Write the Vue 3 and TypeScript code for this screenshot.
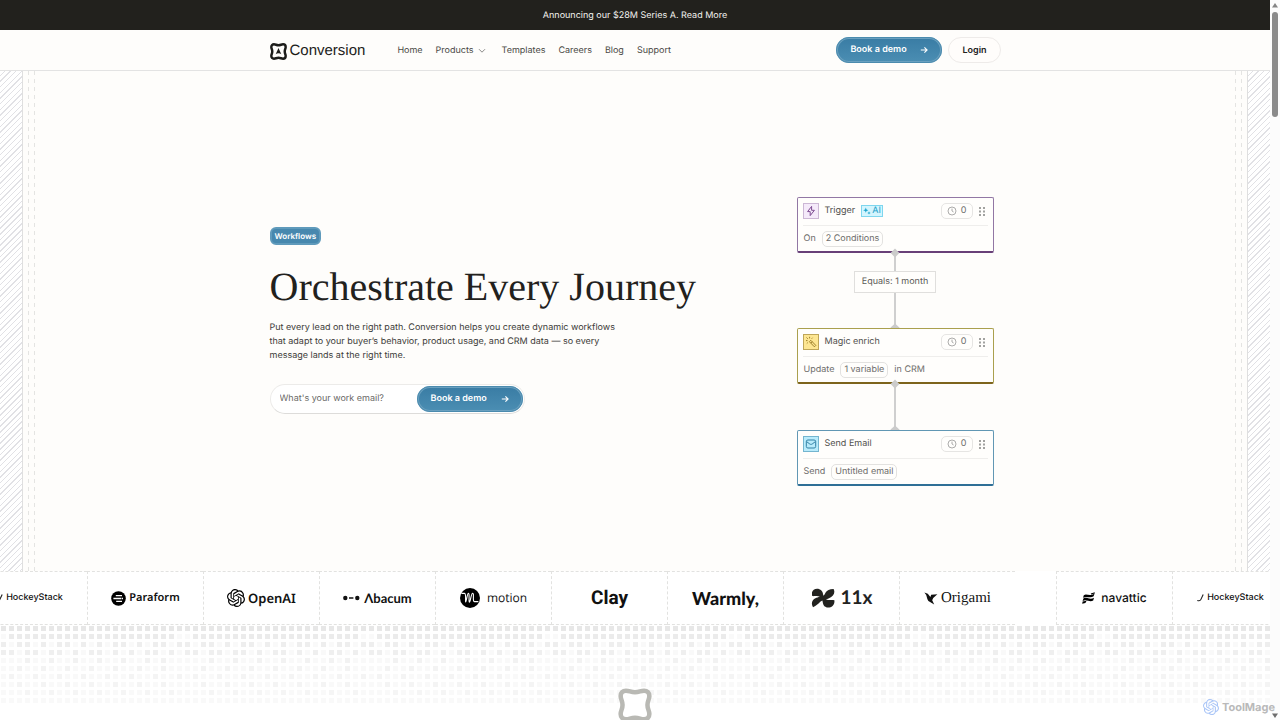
<script setup lang="ts">
interface Step {
  kind: 'trigger' | 'enrich' | 'email'
  title: string
  ai?: boolean
  before: string
  value: string
  after?: string
  link?: 'long' | 'short'
  label?: string
}

const steps: Step[] = [
  { kind: 'trigger', title: 'Trigger', ai: true, before: 'On', value: '2 Conditions', link: 'long', label: 'Equals: 1 month' },
  { kind: 'enrich', title: 'Magic enrich', before: 'Update', value: '1 variable', after: 'in CRM', link: 'short' },
  { kind: 'email', title: 'Send Email', before: 'Send', value: 'Untitled email' },
]

const brands = ['HockeyStack', 'Paraform', 'OpenAI', 'Λbacum', 'motion', 'Clay', 'Warmly,', '11x', 'Origami', 'navattic', 'HockeyStack']
const brandClass = ['hockey', 'paraform', 'openai', 'abacum', 'motion', 'clay', 'warmly', 'eleven', 'origami', 'navattic', 'hockey']

const frame =
  'M4.2 1.4C6.2 1.4 6.6 2.3 9 2.3C11.4 2.3 11.8 1.4 13.8 1.4C15.5 1.4 16.6 2.5 16.6 4.2C16.6 6.2 15.6 6.6 15.6 9C15.6 11.4 16.6 11.8 16.6 13.8C16.6 15.5 15.5 16.6 13.8 16.6C11.8 16.6 11.4 15.7 9 15.7C6.6 15.7 6.2 16.6 4.2 16.6C2.5 16.6 1.4 15.5 1.4 13.8C1.4 11.8 2.4 11.4 2.4 9C2.4 6.6 1.4 6.2 1.4 4.2C1.4 2.5 2.5 1.4 4.2 1.4Z'

const knot =
  'M22.2819 9.8211a5.9847 5.9847 0 0 0-.5157-4.9108 6.0462 6.0462 0 0 0-6.5098-2.9A6.0651 6.0651 0 0 0 4.9807 4.1818a5.9847 5.9847 0 0 0-3.9977 2.9 6.0462 6.0462 0 0 0 .7427 7.0966 5.98 5.98 0 0 0 .511 4.9107 6.051 6.051 0 0 0 6.5146 2.9001A5.9847 5.9847 0 0 0 13.2599 24a6.0557 6.0557 0 0 0 5.7718-4.2058 5.9894 5.9894 0 0 0 3.9977-2.9001 6.0557 6.0557 0 0 0-.7475-7.0729zm-9.022 12.6081a4.4755 4.4755 0 0 1-2.8764-1.0408l.1419-.0804 4.7783-2.7582a.7948.7948 0 0 0 .3927-.6813v-6.7369l2.02 1.1686a.071.071 0 0 1 .038.0615v5.5826a4.504 4.504 0 0 1-4.4945 4.4944zm-9.6607-4.1254a4.4708 4.4708 0 0 1-.5346-3.0137l.142.0852 4.783 2.7582a.7712.7712 0 0 0 .7806 0l5.8428-3.3685v2.3324a.0804.0804 0 0 1-.0332.0615L9.74 19.9502a4.4992 4.4992 0 0 1-6.1408-1.6464zM2.3408 7.8956a4.485 4.485 0 0 1 2.3655-1.9728V11.6a.7664.7664 0 0 0 .3879.6765l5.8144 3.3543-2.0201 1.1685a.0757.0757 0 0 1-.071 0l-4.8303-2.7865A4.504 4.504 0 0 1 2.3408 7.872zm16.5963 3.8558L13.1038 8.364 15.1192 7.2a.0757.0757 0 0 1 .071 0l4.8303 2.7913a4.4944 4.4944 0 0 1-.6765 8.1042v-5.6772a.79.79 0 0 0-.407-.667zm2.0107-3.0231l-.142-.0852-4.7735-2.7818a.7759.7759 0 0 0-.7854 0L9.409 9.2297V6.8974a.0662.0662 0 0 1 .0284-.0615l4.8303-2.7866a4.4992 4.4992 0 0 1 6.6802 4.66zM8.3065 12.863l-2.02-1.1638a.0804.0804 0 0 1-.038-.0567V6.0742a4.4992 4.4992 0 0 1 7.3757-3.4537l-.142.0805L8.704 5.459a.7948.7948 0 0 0-.3927.6813zm1.0976-2.3654l2.602-1.4998 2.6069 1.4998v2.9994l-2.5974 1.4997-2.6067-1.4997Z'

// One repeat of the halftone grid: '#' is a strong cell, '.' a faint one.
const grid = [
  '#######################',
  '.#####################.',
  '#.##.#.##.#.#.##.#.##.#',
  '##.##.##.#.##.#.#.##.#.',
  '...#..#..#..#..#..#.#..',
  '..#..#..#..#..#..#..#..',
  '.#..#..#..#..#..#..#..#',
  '..#..#..#..#..#..#..#..',
  '...#..#..#..#..#..#..#.',
  '.......................',
]
const strong = ['#e7e7e7', '#ebebeb', '#eeeeee', '#efefef', '#f2f2f2', '#f3f3f3', '#f4f4f4', '#f4f4f4', '#f5f5f5', '#f8f8f8']
const cells = grid.flatMap((row, r) =>
  row.split('').map((c, k) => ({ x: 1 + k * 8, y: 3 + r * 8, fill: c === '#' ? strong[r] : '#f9f9f9' })),
)
</script>

<template>
  <div class="window">
    <div class="page">
      <a class="announce" href="#series-a">Announcing our $28M Series A. Read More</a>

      <header class="topbar">
        <div class="container bar">
          <a class="logo" href="#home">
            <svg width="17" height="17" viewBox="0 0 18 18" aria-hidden="true">
              <path :d="frame" fill="none" stroke="#1c1c1a" stroke-width="2.6" />
              <path d="M9 5.2L12 11.8C10.6 10.6 7.4 10.6 6 11.8Z" fill="#1c1c1a" />
            </svg>
            <span>Conversion</span>
          </a>
          <nav class="links">
            <a href="#home">Home</a>
            <a class="products" href="#products">Products
              <svg width="8" height="6" viewBox="0 0 8 6" aria-hidden="true"><path d="M1 1.2L4 4.2L7 1.2" fill="none" stroke="#8a8a88" /></svg>
            </a>
            <a href="#templates">Templates</a>
            <a href="#careers">Careers</a>
            <a href="#blog">Blog</a>
            <a href="#support">Support</a>
          </nav>
          <div class="actions">
            <button class="cta" type="button">Book a demo
              <svg width="8" height="8" viewBox="0 0 8 8" aria-hidden="true"><path d="M0.8 4H7M4.4 1.3L7.1 4L4.4 6.7" fill="none" stroke="#fff" stroke-width="1.1" /></svg>
            </button>
            <a class="login" href="#login">Login</a>
          </div>
        </div>
      </header>

      <main class="hero">
        <div class="rail left" aria-hidden="true"><i class="hatch"></i><i class="dash"></i><i class="dash"></i></div>
        <div class="container stage">
          <section class="copy">
            <span class="tag">Workflows</span>
            <h1>Orchestrate Every Journey</h1>
            <p>Put every lead on the right path. Conversion helps you create dynamic workflows that adapt to your buyer’s behavior, product usage, and CRM data — so every message lands at the right time.</p>
            <form class="signup" @submit.prevent>
              <input type="email" aria-label="Work email" placeholder="What's your work email?" />
              <button class="cta" type="submit">Book a demo
                <svg width="8" height="8" viewBox="0 0 8 8" aria-hidden="true"><path d="M0.8 4H7M4.4 1.3L7.1 4L4.4 6.7" fill="none" stroke="#fff" stroke-width="1.1" /></svg>
              </button>
            </form>
          </section>

          <section class="flow" aria-label="Workflow">
            <template v-for="s in steps" :key="s.kind">
              <article class="card" :class="s.kind">
                <div class="head">
                  <span class="icon">
                    <svg v-if="s.kind === 'trigger'" width="12" height="12" viewBox="0 0 12 12" aria-hidden="true"><path d="M6.6 1.4L2.6 6.6H5.2V10.6L9.4 5.3H6.6Z" fill="none" stroke="#7d4b91" stroke-linejoin="round" /></svg>
                    <svg v-else-if="s.kind === 'enrich'" width="12" height="12" viewBox="0 0 12 12" aria-hidden="true"><path d="M4.4 5.7L5.8 4.3L10.8 9.4L9.4 10.8ZM5.8 7.1L7.2 5.7M4.6 0.8V2.4M1 4.6H2.5M1.5 1.5L2.8 2.8M7.6 1.7L6.7 2.7M1.8 7.5L2.8 6.6" fill="none" stroke="#94751f" stroke-width="0.9" /></svg>
                    <svg v-else width="12" height="12" viewBox="0 0 12 12" aria-hidden="true"><rect x="1.3" y="2" width="9.4" height="8" rx="1.6" fill="none" stroke="#3381a5" /><path d="M1.6 3.6L4.8 6C5.5 6.5 6.5 6.5 7.2 6L10.4 3.6" fill="none" stroke="#3381a5" /></svg>
                  </span>
                  <span class="title">{{ s.title }}</span>
                  <span v-if="s.ai" class="ai">
                    <svg width="8" height="8" viewBox="0 0 8 8" aria-hidden="true"><path d="M2.8 0.6L3.5 2.5L5.4 3.2L3.5 3.9L2.8 5.8L2.1 3.9L0.2 3.2L2.1 2.5ZM6 4.2L6.5 5.4L7.7 5.9L6.5 6.4L6 7.6L5.5 6.4L4.3 5.9L5.5 5.4Z" fill="#1ca4cd" /></svg>AI</span>
                  <span class="count">
                    <svg width="10" height="10" viewBox="0 0 10 10" aria-hidden="true"><circle cx="5" cy="5" r="4" fill="none" stroke="#a3a3a1" stroke-width="0.9" /><path d="M5 2.6V5L6.6 6" fill="none" stroke="#a3a3a1" stroke-width="0.9" /></svg>0</span>
                  <svg class="grip" width="7" height="9" viewBox="0 0 7 9" aria-hidden="true"><g fill="#a2a2a0"><rect x="1" y="0" width="2" height="2" /><rect x="5" y="0" width="2" height="2" /><rect x="1" y="3.5" width="2" height="2" /><rect x="5" y="3.5" width="2" height="2" /><rect x="1" y="7" width="2" height="2" /><rect x="5" y="7" width="2" height="2" /></g></svg>
                </div>
                <div class="body">
                  <span>{{ s.before }}</span><span class="pill">{{ s.value }}</span><span v-if="s.after">{{ s.after }}</span>
                </div>
              </article>
              <div v-if="s.link" class="link" :class="s.link">
                <svg class="knob top" width="10" height="10" viewBox="0 0 10 10" aria-hidden="true"><path d="M5 0.6L9.4 5L5 9.4L0.6 5Z" fill="#cbcbcb" /></svg>
                <span v-if="s.label" class="label">{{ s.label }}</span>
                <svg class="knob end" width="10" height="5" viewBox="0 0 10 5" aria-hidden="true"><path d="M5 0.4L9.4 4.4V5H0.6V4.4Z" fill="#cbcbcb" /></svg>
              </div>
            </template>
          </section>
        </div>
        <div class="rail right" aria-hidden="true"><i class="hatch"></i><i class="dash"></i><i class="dash"></i></div>
      </main>

      <section class="brands" aria-label="Customers">
        <div v-for="(b, i) in brands" :key="i" class="brand" :class="brandClass[i]">
          <svg v-if="brandClass[i] === 'hockey'" width="7" height="8" viewBox="0 0 7 8" aria-hidden="true"><path d="M6.2 0.4L3.8 5.6C3.3 6.8 1.8 6.9 0.3 6.4" fill="none" stroke="#222" stroke-width="1.1" /></svg>
          <svg v-else-if="brandClass[i] === 'paraform'" width="15" height="15" viewBox="0 0 15 15" aria-hidden="true"><circle cx="7.5" cy="7.5" r="7.3" fill="#000" /><path d="M4.8 4.6H11M2.4 7.5H10.3M5.2 10.4H11M10.8 7.5H12" stroke="#fff" stroke-width="1.4" /></svg>
          <svg v-else-if="brandClass[i] === 'openai'" width="18" height="18" viewBox="0 0 24 24" aria-hidden="true"><path :d="knot" fill="#000" /></svg>
          <svg v-else-if="brandClass[i] === 'abacum'" width="17" height="6" viewBox="0 0 17 6" aria-hidden="true"><circle cx="2.3" cy="3" r="2.2" fill="#111" /><circle cx="14.3" cy="3" r="2.2" fill="#111" /><path d="M6 3H10.4" stroke="#111" stroke-width="1.5" /></svg>
          <svg v-else-if="brandClass[i] === 'motion'" width="20" height="20" viewBox="0 0 20 20" aria-hidden="true"><circle cx="10" cy="10" r="10" fill="#000" /><path d="M1.4 5.4H4.6C6.3 5.4 5.2 14 5.7 14C6.4 14 7.2 5.2 8.4 5.2C9.8 5.2 8.5 14.2 9.4 14.2C10.5 14.2 11 5.2 12.6 5.2C14.5 5.2 12.2 13.6 14.4 13.6H18.4" fill="none" stroke="#fff" stroke-width="1.1" /></svg>
          <svg v-else-if="brandClass[i] === 'eleven'" width="24" height="20" viewBox="0 0 24 20" aria-hidden="true"><path d="M1 4.6C1.6 0.6 7.4 -0.6 10.4 2.6C12.4 4.8 11.8 6.6 12.6 7.8C14.6 6.4 13.6 1.4 22.6 1C24.6 4.6 22.4 8.8 18 10.2C16.6 10.8 15.4 11.2 15 11.6C18 12.4 20.8 11.8 23.4 12.2C24 17.4 19.8 20.2 15.8 19.4C11.6 18.4 12 14.8 11.4 12.6C8.4 13.4 9 16 2 19.2C-0.4 15 1.2 11.6 5.4 9.8C7.2 9.2 8.4 8.9 8.8 8.5C6.4 8.2 3.6 8.6 1 7.8Z" fill="#22221f" /></svg>
          <svg v-else-if="brandClass[i] === 'origami'" width="14" height="13" viewBox="0 0 14 13" aria-hidden="true"><path d="M0.4 0.6L3.8 1.8L6.4 5L7.2 2.8L13.4 2.3L9.2 6L8.2 8.2L10.2 12.4L4.4 9C3 7.4 2.9 5 2.2 3.1Z" fill="#111" /></svg>
          <svg v-else-if="brandClass[i] === 'navattic'" width="13" height="12" viewBox="0 0 13 12" aria-hidden="true"><path d="M1.8 3.2C5 1.2 7.6 5.2 12.6 1.4L11.6 4.2C7.6 6.8 4.8 3.4 1 5.8ZM1.4 6.4C5 4.6 7.6 8.2 12 5.8L11.2 8.6C7.4 10.6 4.6 6.8 0.6 9ZM0.6 9.6L4.6 8.8L3.4 11L0.2 11.8ZM8.8 1.4L12.8 0.2L12.6 1.6L9.2 2.4Z" fill="#000" /></svg>
          <span>{{ b }}</span>
        </div>
      </section>

      <section class="halftone">
        <svg class="dots" aria-hidden="true">
          <defs>
            <pattern id="halftone-grid" width="184" height="96" patternUnits="userSpaceOnUse">
              <rect v-for="(c, i) in cells" :key="i" :x="c.x" :y="c.y" width="5" height="5" :fill="c.fill" />
            </pattern>
          </defs>
          <rect width="100%" height="82" fill="url(#halftone-grid)" />
        </svg>
        <svg class="emblem" width="34" height="34" viewBox="0 0 18 18" aria-hidden="true"><path :d="frame" fill="#fff" stroke="#b9b9b4" stroke-width="2.4" /></svg>
      </section>
    </div>

    <div class="scroll" aria-hidden="true">
      <svg width="6" height="5" viewBox="0 0 6 5"><path d="M3 0L6 4.5H0Z" fill="#858585" /></svg>
      <i class="thumb"></i>
      <svg width="6" height="5" viewBox="0 0 6 5"><path d="M3 5L6 0.5H0Z" fill="#6d6d6d" /></svg>
    </div>

    <div class="mark">
      <svg width="16" height="16" viewBox="0 0 24 24" aria-hidden="true"><path :d="knot" fill="#a9c5f7" /></svg>
      <span>ToolMage</span>
    </div>
  </div>
</template>

<style>
body {
  margin: 0;
}
</style>

<style scoped>
.window {
  position: relative;
  display: flex;
  height: 100vh;
  overflow: hidden;
  background: #fff;
  color: #22211d;
  font-family: Inter, "Liberation Sans", sans-serif;
  font-size: 9px;
  line-height: 14px;
  text-rendering: geometricPrecision;
}
.window *,
.window *::before {
  box-sizing: border-box;
}
a {
  color: inherit;
  text-decoration: none;
}
svg {
  display: block;
  flex: none;
}
.page {
  flex: 1;
  min-width: 0;
  overflow: hidden;
}
.container {
  width: 100%;
  max-width: 731px;
  margin: 0 auto;
}
.announce {
  display: flex;
  align-items: center;
  justify-content: center;
  height: 30px;
  padding-top: 2px;
  background: #22211d;
  color: #f3f2ee;
}
.topbar {
  background: #fefdfb;
  border-bottom: 1px solid #e3e3e3;
}
.bar {
  display: flex;
  align-items: center;
  height: 40px;
}
.logo {
  display: flex;
  align-items: center;
  gap: 3px;
  padding-top: 2px;
  color: #1c1c1a;
  font-family: "Liberation Sans", Arial, sans-serif;
  font-size: 15px;
  line-height: 20px;
}
.links {
  display: flex;
  align-items: center;
  gap: 13px;
  margin-left: 32px;
  padding-top: 2px;
  color: #4a4945;
}
.products {
  display: flex;
  align-items: center;
  gap: 4px;
  padding-right: 3px;
}
.actions {
  display: flex;
  align-items: center;
  gap: 6px;
  margin-left: auto;
}
.cta {
  display: flex;
  align-items: center;
  justify-content: space-between;
  width: 106px;
  height: 26px;
  padding: 0 12px;
  border: 2px solid #6aa0bf;
  border-radius: 13px;
  outline: 1px solid #4b8bae;
  outline-offset: -1px;
  background: linear-gradient(#3a7da5, #4a8db2);
  color: #fff;
  font: 600 9px/14px Inter, "Liberation Sans", sans-serif;
  white-space: nowrap;
  text-rendering: inherit;
}
.login {
  padding: 6px 13px 4px;
  border: 1px solid #eeebe9;
  border-radius: 13px;
  background: #fffdfb;
  font-weight: 600;
}
.hero {
  position: relative;
  display: flex;
  min-height: 500px;
  background: #fefdfb;
}
.rail {
  position: absolute;
  top: 0;
  bottom: 0;
  display: flex;
  gap: 5px;
}
.rail.left {
  left: 0;
}
.rail.right {
  right: 0;
  flex-direction: row-reverse;
}
.hatch {
  width: 23px;
  border-right: 1px solid #dfdfdf;
  background: repeating-linear-gradient(135deg, #fff 0 3px, #e1e1e5 3px 4px);
}
.right .hatch {
  border-right: 0;
  border-left: 1px solid #dfdfdf;
}
.dash {
  width: 1px;
  background: repeating-linear-gradient(#e4e4e2 0 4px, transparent 4px 8px);
}
.stage {
  display: flex;
  align-items: center;
  justify-content: space-between;
}
.copy {
  display: flex;
  flex-direction: column;
  align-items: flex-start;
  padding-bottom: 2px;
}
.tag {
  padding: 0 3px;
  border: 2px solid #5f9abb;
  border-radius: 6px;
  background: #4788ae;
  color: #fff;
  font-size: 8px;
  font-weight: 600;
}
h1 {
  margin: 18px 0 10px;
  font: 400 40px/48px "Liberation Serif", "Times New Roman", serif;
  white-space: nowrap;
}
p {
  max-width: 354px;
  margin: 0;
  color: #3c3b38;
}
.signup {
  display: flex;
  align-items: center;
  margin: 21px 0 0;
  padding: 1px;
  border: 1px solid #ecebe9;
  border-bottom-color: #dddcda;
  border-radius: 15px;
  background: #fff;
}
.signup input {
  width: 145px;
  height: 26px;
  padding: 0 0 0 8px;
  border: 0;
  outline: 0;
  background: transparent;
  font: 9px/14px Inter, "Liberation Sans", sans-serif;
  text-rendering: inherit;
}
.signup input::placeholder {
  color: #6b6a67;
  opacity: 1;
}
.flow {
  display: flex;
  flex-direction: column;
  width: 197px;
  margin-right: 7px;
  padding-top: 41px;
  color: #6e6d6b;
}
.card {
  padding: 0 5px;
  border: 1px solid;
  border-bottom-width: 2px;
  border-radius: 2px;
  background: #fffefc;
}
.trigger {
  border-color: #9277a4;
  border-bottom-color: #684078;
}
.enrich {
  border-color: #aaa04e;
  border-bottom-color: #7d641c;
}
.email {
  border-color: #6197b4;
  border-bottom-color: #2f6f96;
}
.head {
  display: flex;
  align-items: center;
  height: 28px;
  padding-bottom: 1px;
  border-bottom: 1px solid #efeeec;
}
.icon {
  display: grid;
  place-items: center;
  width: 16px;
  height: 16px;
  margin-right: 6px;
  border: 1px solid;
}
.trigger .icon {
  border-color: #ccb7d5;
  background: #f5eafa;
}
.enrich .icon {
  border-color: #bfa658;
  background: #fde692;
}
.email .icon {
  border-color: #74b5cf;
  background: #b9ebfb;
}
.title {
  color: #51504d;
}
.ai {
  display: flex;
  align-items: center;
  gap: 1px;
  height: 12px;
  margin-left: 6px;
  padding: 0 1px;
  border: 1px solid #7fd6ee;
  background: #d3f5fe;
  color: #1c9fc8;
}
.count {
  display: flex;
  align-items: center;
  gap: 4px;
  height: 16px;
  margin-left: auto;
  padding: 0 5px;
  border: 1px solid #e6e5e3;
  border-radius: 5px;
}
.grip {
  margin: 0 3px 0 5px;
}
.body {
  display: flex;
  align-items: center;
  gap: 6px;
  height: 25px;
  padding-left: 1px;
}
.pill {
  height: 16px;
  padding: 0 3px;
  border: 1px solid #e3e2e0;
  border-radius: 5px;
}
.link {
  position: relative;
  display: flex;
  align-items: center;
  justify-content: center;
  height: 75px;
  padding-bottom: 18px;
  background: linear-gradient(#cfcfcf, #cfcfcf) center / 2px 100% no-repeat;
}
.link.short {
  height: 46px;
}
.knob {
  position: absolute;
  left: 50%;
  margin-left: -5px;
}
.knob.top {
  top: -5px;
}
.knob.end {
  bottom: 0;
}
.label {
  padding: 3px 7px;
  border: 1px solid #e0dfdd;
  background: #fffefc;
  color: #5b5a57;
}
.brands {
  display: flex;
  height: 54px;
  margin-left: -29px;
  background: #fff;
  color: #111;
}
.brand {
  display: flex;
  flex: none;
  align-items: center;
  justify-content: center;
  gap: 3px;
  width: 116px;
  border: 1px dashed #e2e2e0;
  border-right: 0;
  white-space: nowrap;
}
.hockey {
  font: 500 9px/14px Inter, sans-serif;
}
.paraform {
  font: 600 11px/16px "Noto Sans", sans-serif;
}
.openai {
  font: 600 13px/18px "Noto Sans", sans-serif;
}
.abacum {
  gap: 4px;
  font: 700 13px/16px Lato, sans-serif;
}
.motion {
  gap: 7px;
  font: 400 12px/16px "Open Sans", sans-serif;
}
.clay {
  font: 700 19px/24px Roboto, sans-serif;
}
.warmly {
  font: 900 18px/20px Lato, sans-serif;
}
.eleven {
  gap: 6px;
  color: #22221f;
  font: 700 19px/24px Lato, sans-serif;
}
.origami {
  margin-right: 41px;
  font: 400 15px/18px "Liberation Serif", serif;
}
.navattic {
  gap: 6px;
  font: 500 12px/16px Inter, sans-serif;
}
.halftone {
  position: relative;
  display: flex;
  justify-content: center;
  padding-top: 63px;
  background: #fff;
}
.dots {
  position: absolute;
  top: -2px;
  left: 0;
  width: 100%;
  height: 84px;
}
.emblem {
  position: relative;
}
.scroll {
  display: flex;
  flex: none;
  flex-direction: column;
  align-items: center;
  width: 10px;
  padding: 3px 0 2px;
  background: #fcfcfc;
}
.thumb {
  width: 6px;
  height: 105px;
  margin: 4px 0 auto;
  border-radius: 3px;
  background: #8b8b8b;
}
.mark {
  position: absolute;
  right: 5px;
  bottom: 4px;
  display: flex;
  align-items: center;
  gap: 3px;
  color: #b9b9b9;
  font: 700 11px/18px Inter, sans-serif;
}
</style>
